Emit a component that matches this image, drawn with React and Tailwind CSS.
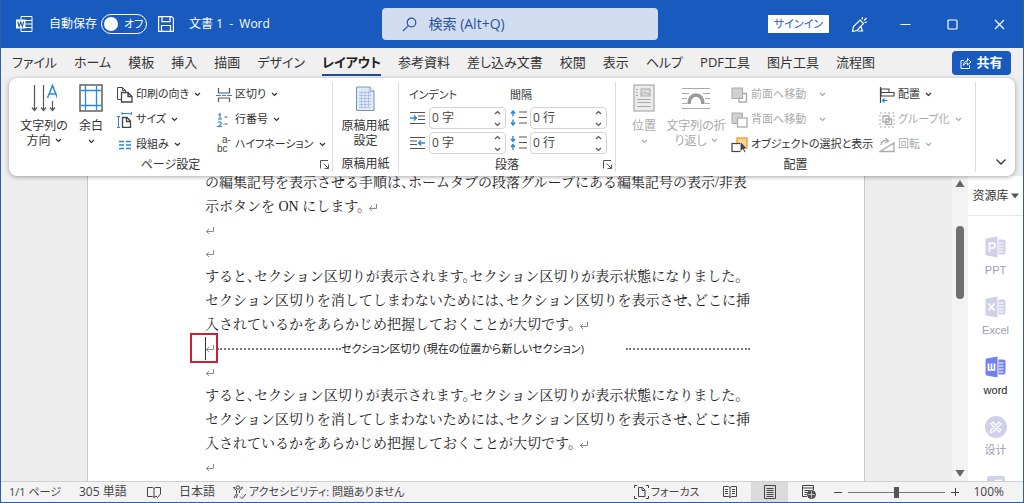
import React from "react";

const UI_FONT = "font-['Open_Sans','Noto_Sans_CJK_JP',sans-serif]";
const DOC_FONT = "font-['Liberation_Serif','Noto_Serif_CJK_JP','Noto_Sans_CJK_JP',serif]";

function Icon({ w = 16, h = 16, className = "", children }) {
  return (
    <svg
      width={w}
      height={h}
      viewBox={`0 0 ${w} ${h}`}
      fill="none"
      stroke="currentColor"
      aria-hidden="true"
      className={`shrink-0 ${className}`}
    >
      {children}
    </svg>
  );
}

function Chevron({ className = "" }) {
  return (
    <Icon w={7} h={5} className={className}>
      <path d="M1 1l2.5 2.5L6 1" strokeWidth="1.2" />
    </Icon>
  );
}

function Launcher() {
  return (
    <button type="button" aria-label="詳細設定" className="absolute right-0.5 bottom-0.5 text-[#555]">
      <Icon w={10} h={10}>
        <path d="M.5 8.500V.5H8M3.500 3.500l5 5M8.500 4.500v4h-4" />
      </Icon>
    </button>
  );
}

/* ---------- title bar ---------- */

function TitleBar() {
  return (
    <header className="grid h-12 shrink-0 grid-cols-[1fr_276px_1fr] items-center bg-[#185abd] pl-[15px] text-white">
      <div className="flex items-center text-xs whitespace-nowrap">
        <Icon w={17} h={16} className="mr-4">
          <path d="M5 3.500V.5h11v15H5v-3M9 4.500h7M10 8h6M9 11.500h7" />
          <rect x="0" y="3.500" width="9.500" height="9" fill="white" stroke="none" />
          <path d="M1.800 5.500l1.300 5 1.600-4.600 1.600 4.600 1.400-5" stroke="#185abd" strokeWidth="1.100" />
        </Icon>
        <label className="flex items-center gap-1">
          自動保存
          <input type="checkbox" className="peer sr-only" />
          <span className="flex h-5 w-[46px] items-center gap-1.5 rounded-full border border-white pl-0.5 text-[11px]">
            <span className="size-[14px] rounded-full bg-white" />
            オフ
          </span>
        </label>
        <button type="button" aria-label="保存" className="mr-[15px] ml-[11px]">
          <Icon w={16} h={16}>
            <path d="M.6.6h13l1.800 1.800v13H.6zM4 .6v5h8v-5M3.500 15.400V9.500h9v5.900" strokeWidth="1.200" />
          </Icon>
        </button>
        <span>文書 1&nbsp; -&nbsp; Word</span>
      </div>
      <label className="flex h-8 items-center gap-3 rounded bg-[#d1dcf0] pl-5 text-[#2a549c]">
        <Icon w={15} h={15}>
          <circle cx="9.500" cy="5.500" r="4.300" strokeWidth="1.200" />
          <path d="M6.400 8.600L1 14" strokeWidth="1.200" />
        </Icon>
        <input
          type="text"
          aria-label="検索"
          placeholder="検索 (Alt+Q)"
          className="min-w-0 flex-1 bg-transparent text-sm outline-none placeholder:text-[#2a549c]"
        />
      </label>
      <div className="flex items-center justify-end pr-[18px]">
        <button type="button" className="h-[18px] w-[61px] bg-white text-[11px] leading-[18px] text-[#185abd]">
          サインイン
        </button>
        <button type="button" aria-label="近日公開の機能" className="ml-[22px]">
          <Icon w={17} h={17}>
            <path d="M1.500 15.500l1-5L9 4l3.500 3.500-6.500 7zM6.500 15h5l-1.500-4M11 3.500l.5-2.500M13 4.500l2.500-2.500M13.500 6.500l2.500-.5" strokeWidth="1.200" />
          </Icon>
        </button>
        <button type="button" aria-label="最小化" className="ml-8">
          <Icon w={11} h={11}>
            <path d="M.5 5.500h10" />
          </Icon>
        </button>
        <button type="button" aria-label="最大化" className="ml-9">
          <Icon w={11} h={11}>
            <rect x="1" y="1" width="9" height="9" rx="1" strokeWidth="1.200" />
          </Icon>
        </button>
        <button type="button" aria-label="閉じる" className="ml-9">
          <Icon w={11} h={11}>
            <path d="M1 1l9 9M10 1l-9 9" strokeWidth="1.200" />
          </Icon>
        </button>
      </div>
    </header>
  );
}

/* ---------- tabs ---------- */

const TABS = [
  "ファイル", "ホーム", "模板", "挿入", "描画", "デザイン", "レイアウト", "参考資料",
  "差し込み文書", "校閲", "表示", "ヘルプ", "PDF工具", "图片工具", "流程图",
];

function Tabs() {
  return (
    <nav className="flex h-[30px] shrink-0 items-center justify-between bg-[#f0f0f0] pr-3 pl-[11px]">
      <ul className="flex gap-[17px] text-[13px] whitespace-nowrap text-[#333]">
        {TABS.map((t) => (
          <li key={t}>
            <button
              type="button"
              className={
                t === "レイアウト"
                  ? "border-b-2 border-[#1f4e99] leading-6 font-bold text-[#222]"
                  : "border-b-2 border-transparent leading-6"
              }
            >
              {t}
            </button>
          </li>
        ))}
      </ul>
      <button
        type="button"
        className="flex h-6 w-[59px] shrink-0 items-center justify-center gap-1 rounded bg-[#185abd] text-[13px] font-bold text-white"
      >
        <Icon w={12} h={12}>
          <path d="M4 3.500H1v8h8.500V8M3.500 8.500c0-3 1.500-4.500 4-4.500V1.500L11 5 7.500 8V6c-2 0-3 .8-4 2.500z" />
        </Icon>
        共有
      </button>
    </nav>
  );
}

/* ---------- ribbon ---------- */

function Group({ label, launcher, className = "", children }) {
  return (
    <section className={`relative my-1 flex flex-col border-r border-[#dcdcdc] ${className}`}>
      <div className="flex flex-1">{children}</div>
      <h2 className="text-center leading-4">{label}</h2>
      {launcher && <Launcher />}
    </section>
  );
}

function BigButton({ icon, lines, arrow, disabled, className = "" }) {
  return (
    <button
      type="button"
      disabled={disabled}
      className={`flex flex-col items-center leading-[15px] whitespace-nowrap disabled:text-[#aaa] ${className}`}
    >
      <span className="mb-1 flex h-8 items-center">{icon}</span>
      {lines.map((l, i) => (
        <span key={l} className="flex items-center gap-1">
          {l}
          {arrow === "inline" && i === lines.length - 1 && <Chevron />}
        </span>
      ))}
      {arrow === "below" && <Chevron className="mt-1.5" />}
    </button>
  );
}

function SmallButton({ icon, label, arrow = true, wide, disabled }) {
  return (
    <button
      type="button"
      disabled={disabled}
      className="flex h-[25px] items-center gap-[3px] text-[11px] whitespace-nowrap disabled:text-[#aaa]"
    >
      {icon}
      {label}
      {arrow && <Chevron className={wide ? "ml-2.5" : "ml-0.5"} />}
    </button>
  );
}

const DirectionIcon = (
  <Icon w={26} h={28}>
    <path d="M3.500 1v25M1 23.500l2.500 3 2.500-3M12.500 1v25M10 23.500l2.500 3 2.500-3M21.500 17v9M19 23.500l2.500 3 2.500-3" stroke="#555" strokeWidth="1.200" />
    <path d="M16.500 14l5-12.500 5 12.500M18 10h7" stroke="#2b88d8" strokeWidth="1.500" />
  </Icon>
);
const MarginsIcon = (
  <Icon w={24} h={28}>
    <rect x="1" y="1" width="22" height="26" stroke="#555" strokeWidth="1.400" />
    <path d="M6.500 2v24M17.500 2v24M2 6.500h20M2 21.500h20" stroke="#2b88d8" strokeWidth="1.300" />
  </Icon>
);
const OrientationIcon = (
  <Icon w={16} h={16} className="text-[#444]">
    <path d="M4 12.500H.5V.5h5l3 3M5.500.5v3h3V5" />
    <path d="M4.500 5.500h6.500l4 4v5.500h-10.500zM11 5.500v4h4" strokeWidth="1.300" />
  </Icon>
);
const SizeIcon = (
  <Icon w={16} h={16} className="text-[#444]">
    <path d="M1.500 4v11.500M0 4.500h3M0 15.500h3M5 1.500h9.500M5 0v3M14.500 0v3" stroke="#2b88d8" />
    <path d="M5.500 5.500H10l3.500 3.500v6.500h-8zM9.500 5.500V9.500h4" strokeWidth="1.300" />
  </Icon>
);
const ColumnsIcon = (
  <Icon w={16} h={16}>
    <path d="M2 4.500h5M2 8h5M2 11.500h5M9 4.500h5M9 8h5M9 11.500h5" stroke="#2b88d8" strokeWidth="1.400" />
  </Icon>
);
const BreaksIcon = (
  <Icon w={16} h={16} className="text-[#555]">
    <path d="M2.500 1v5h11V1M2.500 15v-4h11v4" strokeWidth="1.200" />
    <path d="M0 8.500h5M6 8.500h4M11 8.500h5" stroke="#2b88d8" />
  </Icon>
);
const LineNumbersIcon = (
  <Icon w={16} h={16}>
    <path d="M2.500 3L4 1.800V7M2 7h4M2 10.500q2-1.500 3 0t-3 4h4" stroke="#2b88d8" strokeWidth="1.200" />
    <path d="M8.500 5h3M8.500 12h3" stroke="#555" strokeWidth="1.200" />
  </Icon>
);
const HyphenIcon = (
  <Icon w={16} h={16}>
    <g fill="#444" stroke="none" className="font-['Liberation_Sans',sans-serif] text-[10px]">
      <text x="6" y="6">a-</text>
      <text x="1" y="15">bc</text>
    </g>
  </Icon>
);
const PaperIcon = (
  <Icon w={19} h={25}>
    <path d="M.5 1h13.500l4 4v19.500H.5z" fill="#dfe9f7" stroke="#7d93b8" />
    <path d="M14 1v4h4" fill="#fff" stroke="#7d93b8" />
    <path d="M3 6.500h12M3 9.500h12M3 12.500h12M3 15.500h12M3 18.500h12M3 21.500h12M5.500 5v17M9 5v17M12.500 5v17" stroke="#9fb8de" strokeWidth=".7" />
  </Icon>
);
const PositionIcon = (
  <Icon w={22} h={28}>
    <rect x="1" y="1" width="20" height="26" fill="#ececec" strokeWidth="1.200" />
    <rect x="8" y="5" width="9" height="7" fill="#ddd" />
    <path d="M8.500 11l3-3 2 2 1.500-1 2 2M3 5.500h2M3 8.500h2M3 11.500h2M4 15.500h14M4 18.500h14M4 22.500h14" />
  </Icon>
);
const WrapIcon = (
  <Icon w={28} h={24}>
    <path d="M0 2.500h28M0 7.500h7M21 7.500h7M0 12.500h5M23 12.500h5M0 17.500h5M23 17.500h5M0 22.500h28" />
    <path d="M7 18c0-12 14-12 14 0" stroke="#999" strokeWidth="3.500" />
  </Icon>
);
const FrontIcon = (
  <Icon w={17} h={16}>
    <path d="M12 6.500h3.500v8.500H8v-3" strokeWidth="1.300" />
    <rect x="1" y="1" width="10.500" height="10.500" fill="#d0d0d0" />
  </Icon>
);
const BackIcon = (
  <Icon w={17} h={16}>
    <path d="M6 11.500H1V1h10.500v4" fill="#d0d0d0" />
    <rect x="6.500" y="6" width="9.500" height="9" fill="#fff" strokeWidth="1.300" />
  </Icon>
);
const SelectIcon = (
  <Icon w={17} h={16} className="text-[#444]">
    <rect x="6" y="1" width="10" height="10" fill="#ffd58a" stroke="#ed9b33" strokeWidth="1.300" />
    <rect x="1" y="6.500" width="8.500" height="8" fill="#fff" strokeWidth="1.200" />
    <path d="M9.500 4.500v10l2.300-2.200 1.500 3.200 1.500-.7-1.500-3h3z" fill="#444" stroke="#fff" strokeWidth=".6" />
  </Icon>
);
const AlignIcon = (
  <Icon w={16} h={16} className="text-[#444]">
    <path d="M1.500 0v16" strokeWidth="1.200" />
    <path d="M2 2h8v3.500H2zM2 5.500h13V9H2z" strokeWidth="1.100" />
    <path d="M3 13.500h5.500M5.500 11.500l-2 2 2 2" stroke="#2b88d8" strokeWidth="1.200" />
  </Icon>
);
const GroupIcon = (
  <Icon w={16} h={16}>
    <path d="M1 1h14v14H1z" strokeDasharray="2 2" />
    <path d="M4 4h6v6H4zM7 7h5.500v5.500H7z" strokeWidth="1.300" />
  </Icon>
);
const RotateIcon = (
  <Icon w={16} h={16}>
    <path d="M1 14.500L15 6v8.500zM2 8c0-4 4-5.500 7-4M6.500 1l3 3-3.500 2" strokeWidth="1.300" />
  </Icon>
);

const IndentLeftIcon = (
  <Icon w={15} h={14} className="text-[#555]">
    <path d="M0 1.500h15M8 5h7M8 8.500h7M0 12.500h15" strokeWidth="1.200" />
    <path d="M0 7h6M4 4.500L6.500 7 4 9.500" stroke="#2b88d8" strokeWidth="1.400" />
  </Icon>
);
const IndentRightIcon = (
  <Icon w={15} h={14} className="text-[#555]">
    <path d="M0 1.500h15M0 5h7M0 8.500h7M0 12.500h15" strokeWidth="1.200" />
    <path d="M9 7h6M11 4.500L8.500 7 11 9.500" stroke="#2b88d8" strokeWidth="1.400" />
  </Icon>
);
const SpaceBeforeIcon = (
  <Icon w={17} h={16} className="text-[#555]">
    <path d="M9 2h8M9 7.500h8M9 13h8" strokeWidth="1.200" />
    <path d="M3 1v5.500M1 3.500l2-2.500 2 2.500M3 9.500V15M1 12.500L3 15l2-2.500" stroke="#2b88d8" strokeWidth="1.400" />
  </Icon>
);
const SpaceAfterIcon = (
  <Icon w={17} h={16} className="text-[#555]">
    <path d="M9 2h8M9 7.500h8M9 13h8" strokeWidth="1.200" />
    <path d="M3 1v5.500M1 4l2 2.500L5 4M3 9.500V15M1 12l2-2.500L5 12" stroke="#2b88d8" strokeWidth="1.400" />
  </Icon>
);

function Spin({ icon, label, value }) {
  return (
    <label className="mb-[3px] flex h-[22px] items-center gap-[3px]">
      <span className="flex w-[17px] justify-center">{icon}</span>
      <span className="flex h-[22px] w-[77px] items-center rounded border border-[#d4d4d4] pr-1">
        <input aria-label={label} defaultValue={value} className="w-0 flex-1 bg-transparent pl-0.5 text-xs text-[#444] outline-none" />
        <span className="flex flex-col gap-[7px] text-[#555]">
          <Chevron className="rotate-180" />
          <Chevron />
        </span>
      </span>
    </label>
  );
}

function Ribbon() {
  return (
    <div className="relative z-10 mx-2 flex h-[98px] shrink-0 rounded-lg bg-white text-xs text-[#333] shadow-[0_1px_4px_rgba(0,0,0,0.35)]">
      <Group label="ページ設定" launcher className="w-[324px]">
        <BigButton className="ml-2 w-[54px]" icon={DirectionIcon} lines={["文字列の", "方向"]} arrow="inline" />
        <BigButton className="w-10" icon={MarginsIcon} lines={["余白"]} arrow="below" />
        <div className="ml-1.5 w-[99px]">
          <SmallButton icon={OrientationIcon} label="印刷の向き" />
          <SmallButton icon={SizeIcon} label="サイズ" />
          <SmallButton icon={ColumnsIcon} label="段組み" />
        </div>
        <div>
          <SmallButton icon={BreaksIcon} label="区切り" />
          <SmallButton icon={LineNumbersIcon} label="行番号" />
          <SmallButton icon={HyphenIcon} label="ハイフネーション" />
        </div>
      </Group>
      <Group label="原稿用紙" className="w-[66px]">
        <BigButton className="flex-1" icon={PaperIcon} lines={["原稿用紙", "設定"]} />
      </Group>
      <Group label="段落" launcher className="w-[217px]">
        <fieldset className="ml-2.5 w-[101px]">
          <legend className="h-[25px] text-[11px] leading-[25px]">インデント</legend>
          <Spin icon={IndentLeftIcon} label="左インデント" value="0 字" />
          <Spin icon={IndentRightIcon} label="右インデント" value="0 字" />
        </fieldset>
        <fieldset>
          <legend className="h-[25px] text-[11px] leading-[25px]">間隔</legend>
          <Spin icon={SpaceBeforeIcon} label="前の間隔" value="0 行" />
          <Spin icon={SpaceAfterIcon} label="後の間隔" value="0 行" />
        </fieldset>
      </Group>
      <Group label="配置" className="w-[360px]">
        <BigButton className="ml-2 w-10" icon={PositionIcon} lines={["位置"]} arrow="below" disabled />
        <BigButton className="w-16" icon={WrapIcon} lines={["文字列の折", "り返し"]} arrow="inline" disabled />
        <div className="ml-[3px] w-[148px]">
          <SmallButton icon={FrontIcon} label="前面へ移動" wide disabled />
          <SmallButton icon={BackIcon} label="背面へ移動" wide disabled />
          <SmallButton icon={SelectIcon} label="オブジェクトの選択と表示" arrow={false} />
        </div>
        <div>
          <SmallButton icon={AlignIcon} label="配置" />
          <SmallButton icon={GroupIcon} label="グループ化" disabled />
          <SmallButton icon={RotateIcon} label="回転" disabled />
        </div>
      </Group>
      <button type="button" aria-label="リボンの表示オプション" className="mr-2 mb-2.5 ml-auto self-end">
        <Icon w={12} h={8}>
          <path d="M1.500 1.500L6 6l4.500-4.500" strokeWidth="1.300" />
        </Icon>
      </button>
    </div>
  );
}

/* ---------- document ---------- */

function Return({ className = "" }) {
  return (
    <Icon w={10} h={8} className={`inline-block text-[#888] ${className}`}>
      <path d="M8.500 0v4.500H1.500M4 2L1.500 4.500 4 7" />
    </Icon>
  );
}

function Paragraph({ lines }) {
  return (
    <p className="leading-6 whitespace-nowrap">
      {lines.map((l, i) => (
        <span key={l} className="block">
          {l}
          {i === lines.length - 1 && l.endsWith("。") && <Return className="ml-1" />}
        </span>
      ))}
    </p>
  );
}

function EmptyLine() {
  return (
    <p className="flex h-[23px] items-center">
      <Return />
    </p>
  );
}

const SECTION_TEXT = [
  "すると、セクション区切りが表示されます。セクション区切りが表示状態になりました。",
  "セクション区切りを消してしまわないためには、セクション区切りを表示させ、どこに挿",
  "入されているかをあらかじめ把握しておくことが大切です。",
];

function Document() {
  return (
    <main className="min-w-0 flex-1 overflow-hidden bg-[#ededed] pr-[87px] pl-[86px]">
      <article
        className={`flow-root h-full border-x border-[#c8c8c8] bg-white pl-[117px] text-sm text-[#222] [font-feature-settings:'halt'] ${DOC_FONT}`}
      >
        <div className="-mt-[5px] w-[545px]">
          <Paragraph
            lines={[
              "の編集記号を表示させる手順は、ホームタブの段落グループにある編集記号の表示/非表",
              "示ボタンを ON にします。",
            ]}
          />
          <EmptyLine />
          <EmptyLine />
          <Paragraph lines={SECTION_TEXT} />
          <div className="relative flex h-6 items-center">
            <Return />
            <span className="absolute top-0 left-0 h-[23px] w-px bg-[#333]" />
            <span className="absolute -top-1 -left-[15px] h-[30px] w-[28px] border-2 border-[#cf2030]" />
            <span className="ml-0.5 w-[124px] border-b-2 border-dotted border-[#777]" />
            <span className={`text-[11px] whitespace-nowrap [font-feature-settings:'palt'] ${UI_FONT}`}>
              セクション区切り (現在の位置から新しいセクション)
            </span>
            <span className="ml-auto w-[124px] border-b-2 border-dotted border-[#777]" />
          </div>
          <EmptyLine />
          <Paragraph lines={SECTION_TEXT} />
          <EmptyLine />
        </div>
      </article>
    </main>
  );
}

function ScrollBar() {
  return (
    <div className="flex w-4 shrink-0 flex-col items-center bg-[#f3f3f3] text-[#666]">
      <Icon w={10} h={7} className="mt-1">
        <path d="M5 0l4.500 7h-9z" fill="currentColor" stroke="none" />
      </Icon>
      <div className="mt-[39px] h-[73px] w-2 rounded-full bg-[#707070]" />
      <Icon w={10} h={7} className="mt-auto mb-1">
        <path d="M5 7L.5 0h9z" fill="currentColor" stroke="none" />
      </Icon>
    </div>
  );
}

/* ---------- resource panel ---------- */

function BookIcon({ children }) {
  return (
    <Icon w={21} h={22}>
      <path d="M13.500 3.500h5q2 0 2 2v11q0 2-2 2h-5z" fill="currentColor" stroke="none" />
      <path d="M14 7h4.500M14 10h4.500M14 13h4.500M14 16h4.500" stroke="#fff" />
      <path d="M1.500 2.500L12.500.5v21l-11-2q-1-.3-1-1.500V4q0-1.200 1-1.500z" fill="currentColor" stroke="none" />
      <g stroke="#fff" strokeWidth="1.700">{children}</g>
    </Icon>
  );
}

const RESOURCES = [
  { id: "ppt", label: "PPT", icon: <BookIcon><path d="M4.500 16V7h3q2.500 0 2.500 2.500T7.500 12h-3" /></BookIcon> },
  { id: "excel", label: "Excel", icon: <BookIcon><path d="M3.500 7.500l6 7M9.500 7.500l-6 7" /></BookIcon> },
  { id: "word", label: "word", active: true, icon: <BookIcon><path d="M3.500 7.500v6.500h6v-6.500M6.500 7.500v6.500" /></BookIcon> },
  {
    id: "design",
    label: "设计",
    icon: (
      <Icon w={22} h={22}>
        <circle cx="11" cy="11" r="11" fill="currentColor" stroke="none" />
        <path d="M6 8l2-2 8 8-2 2zM6 14l8-8 2 2-8 8-2.500.5z" stroke="#fff" strokeWidth="1.200" />
      </Icon>
    ),
  },
  {
    id: "more",
    icon: (
      <Icon w={18} h={22}>
        <rect x="0" y="0" width="18" height="22" rx="2" fill="currentColor" stroke="none" />
        <path d="M8 4.500h7" stroke="#fff" strokeWidth="1.500" />
      </Icon>
    ),
  },
];

function ResourcePanel() {
  return (
    <aside className="flex w-[55px] shrink-0 flex-col overflow-hidden bg-white">
      <button
        type="button"
        className="flex h-10 shrink-0 items-center justify-center gap-0.5 border-b border-[#e6e6e6] text-xs whitespace-nowrap text-[#333]"
      >
        资源库
        <Icon w={8} h={6}>
          <path d="M0 .5h8L4 5.500z" fill="#555" stroke="none" />
        </Icon>
      </button>
      <ul className="flex flex-col items-center pt-5 text-[11px] leading-[16px]">
        {RESOURCES.map((r) => (
          <li key={r.id} className="h-[60px]">
            <a
              href="#"
              className={`flex flex-col items-center gap-1 font-['Liberation_Sans','Noto_Sans_CJK_SC',sans-serif] ${r.active ? "text-[#222]" : "text-[#9a9cb5]"}`}
            >
              <span className={r.active ? "text-[#7280f5]" : "text-[#d0d1e8]"}>{r.icon}</span>
              {r.label}
            </a>
          </li>
        ))}
      </ul>
    </aside>
  );
}

/* ---------- status bar ---------- */

function StatusBar() {
  return (
    <footer className="flex h-[21px] shrink-0 items-center border-t border-[#d0d0d0] bg-[#f3f3f3] pr-[19px] pl-2 text-xs whitespace-nowrap text-[#444]">
      <span className="w-[70px] text-[11px]">1/1 ページ</span>
      <span className="w-[68px]">305 単語</span>
      <button type="button" aria-label="文章校正" className="mr-[18px]">
        <Icon w={14} h={13}>
          <path d="M7 11.500L5.500 10.500H.5v-9h5L7 2.500l1.500-1h5V8M7 2.500v9l2-1.500 1.500 1.500 3-3.500" />
        </Icon>
      </button>
      <span className="w-[53px]">日本語</span>
      <button type="button" className="flex items-center gap-0.5 text-[11px]">
        <Icon w={15} h={14}>
          <circle cx="6" cy="2.500" r="1.700" />
          <path d="M1.500 3l3 2.500v3L2 13M10.500 3L7.500 5.500V8M6 9l-2 4M8 11.500l2 2 4-4.500M1 3q1-1.500 2.500 0M8.500 3q1-1.500 2.500 0" />
        </Icon>
        アクセシビリティ: 問題ありません
      </button>
      <button type="button" className="mr-6 ml-auto flex items-center gap-0.5 text-[11px]">
        <Icon w={15} h={14}>
          <path d="M3 .5H.5V3M.5 11v2.500H3M12 .5h2.500V3M14.500 11v2.500H12M4.500 2.500h4l2.500 2.500v6.500H4.500zM8 2.500v3h3" />
        </Icon>
        フォーカス
      </button>
      <button type="button" aria-label="閲覧モード" className="mr-3.5">
        <Icon w={14} h={12}>
          <path d="M7 1.500v10M7 1.500L5.500.5H.5v10h5L7 11.500l1.500-1h5V.5h-5zM2 3.500h3M2 5.500h3M2 7.500h3M9 3.500h3M9 5.500h3M9 7.500h3" />
        </Icon>
      </button>
      <button type="button" aria-label="印刷レイアウト" className="flex h-5 w-[37px] items-center justify-center bg-[#dadada]">
        <Icon w={12} h={14}>
          <path d="M.5.5h11v13H.5zM2.500 3.500h7M2.500 5.500h7M2.500 7.500h7M2.500 9.500h7M2.500 11.500h7" />
        </Icon>
      </button>
      <button type="button" aria-label="Web レイアウト" className="mr-[18px] ml-3.5">
        <Icon w={14} h={14}>
          <path d="M5 11.500H.5V.5h11V5M.5 3h11M2.500 5.500h5M2.500 7.500h3M2.500 9.500h2" />
          <circle cx="9.500" cy="9.500" r="4" fill="#555" />
          <path d="M6 9.500h7M9.500 6v7" stroke="#f3f3f3" strokeWidth=".6" />
        </Icon>
      </button>
      <button type="button" aria-label="縮小">
        <Icon w={8} h={8}>
          <path d="M0 4.500h8" />
        </Icon>
      </button>
      <input
        type="range"
        aria-label="ズーム"
        min="0"
        max="200"
        defaultValue="100"
        className="mx-1.5 h-3 w-[97px] appearance-none bg-[linear-gradient(#777,#777)] bg-[length:100%_1px] bg-center bg-no-repeat [&::-webkit-slider-thumb]:h-[11px] [&::-webkit-slider-thumb]:w-[5px] [&::-webkit-slider-thumb]:appearance-none [&::-webkit-slider-thumb]:bg-[#555]"
      />
      <button type="button" aria-label="拡大" className="mr-3.5">
        <Icon w={8} h={8}>
          <path d="M0 4.500h8M4.500 0v8" />
        </Icon>
      </button>
      <span>100%</span>
    </footer>
  );
}

export default function App() {
  return (
    <div
      className={`flex h-screen flex-col overflow-hidden border-x border-b border-[#2f5f9f] bg-[#ededed] [font-feature-settings:'palt'] ${UI_FONT}`}
    >
      <TitleBar />
      <Tabs />
      <Ribbon />
      <div className="flex min-h-0 flex-1">
        <Document />
        <ScrollBar />
        <ResourcePanel />
      </div>
      <StatusBar />
    </div>
  );
}
